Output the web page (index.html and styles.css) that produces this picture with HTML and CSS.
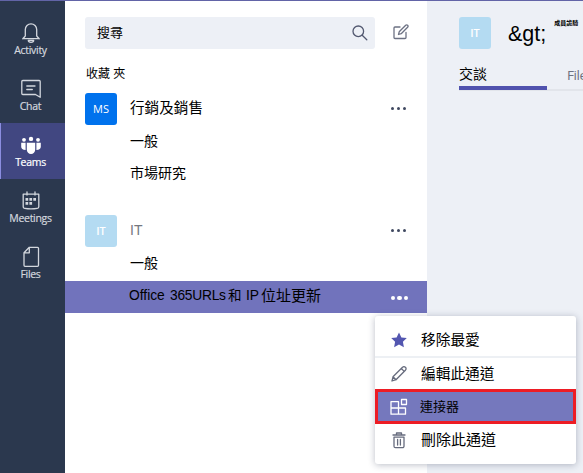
FILE: index.html
```html
<!DOCTYPE html>
<html lang="zh-Hant">
<head>
<meta charset="utf-8">
<title>Teams</title>
<link rel="stylesheet" href="styles.css">
</head>
<body>
<div class="app">
  <nav class="rail">
    <a class="rail-item">
      <svg width="20" height="22" viewBox="0 0 20 22"><path d="M1.800 16.700h16.400M4.300 14V7.500a5.700 5.700 0 0 1 11.400 0V14M4.300 14 1.800 16.700M15.700 14l2.500 2.700M7.300 18.300a2.700 2 0 0 0 5.400 0z"/></svg>
      <span>Activity</span>
    </a>
    <a class="rail-item">
      <svg width="20" height="22" viewBox="0 0 20 22"><path d="M1.800 2.500h16.400a1 1 0 0 1 1 1v15.800l-4.700-2.800H1.800a1 1 0 0 1-1-1v-12a1 1 0 0 1 1-1zM5.800 8H14M5.800 11.500h5.500"/></svg>
      <span>Chat</span>
    </a>
    <a class="rail-item active">
      <svg class="solid" width="20" height="22" viewBox="0 0 20 22"><circle cx="10" cy="4.900" r="2.200"/><circle cx="3" cy="5.800" r="1.900"/><circle cx="17" cy="5.800" r="1.900"/><path d="M5.800 8.800h8.400v6.900a4.200 4.200 0 0 1-8.400 0zM.2 8.800h4.400v7.200C1.600 16 .2 14.400.2 12.800zM19.800 8.800h-4.400v7.200c3 0 4.400-1.600 4.400-3.200z"/></svg>
      <span>Teams</span>
    </a>
    <a class="rail-item">
      <svg width="20" height="22" viewBox="0 0 20 22"><path d="M2.200 4.200h15.600v12.600a1.500 1.500 0 0 1-1.500 1.500q-6.300 1-12.600 0a1.500 1.500 0 0 1-1.500-1.500zM6 2v3M14 2v3"/><path class="dots" d="M8.400 8h2.700v2.700H8.400zM12.300 8H15v2.700h-2.700zM4.500 8h2.700v2.700H4.500zM4.500 12h2.700v2.700H4.500zM8.400 12h2.700v2.700H8.400z"/></svg>
      <span>Meetings</span>
    </a>
    <a class="rail-item">
      <svg width="20" height="22" viewBox="0 0 20 22"><path d="M8.300 1.300h8.200a1 1 0 0 1 1 1v17a1 1 0 0 1-1 1H4a1 1 0 0 1-1-1V6.800zM8.300 1.500v5.300H3"/></svg>
      <span>Files</span>
    </a>
  </nav>

  <section class="panel">
    <div class="search-row">
      <div class="search">
        <span>搜尋</span>
        <svg width="16" height="16" viewBox="0 0 16 16"><circle cx="6.300" cy="6.300" r="5.300"/><path d="m10.200 10.200 4.600 4.600"/></svg>
      </div>
      <svg class="compose" width="16" height="16" viewBox="0 0 16 16"><path d="M7 3H2a1 1 0 0 0-1 1v9.500a1 1 0 0 0 1 1h10a1 1 0 0 0 1-1V8.500M5.500 10.500l.7-2.700L12.700 1.300a1.200 1.200 0 0 1 1.900 1.900L8.200 9.700z"/></svg>
    </div>
    <div class="caption">收藏 夾</div>
    <div class="team">
      <div class="avatar ms">MS</div>
      <span class="team-name">行銷及銷售</span>
      <span class="more"><i></i><i></i><i></i></span>
    </div>
    <div class="channel">一般</div>
    <div class="channel">市場研究</div>
    <div class="team second">
      <div class="avatar it">IT</div>
      <span class="team-name muted">IT</span>
      <span class="more"><i></i><i></i><i></i></span>
    </div>
    <div class="channel">一般</div>
    <div class="channel selected">
      <span class="sel-name"><span class="office">Office</span><span class="urls">365URLs</span><span class="and">和</span><span class="ip">IP</span><span>位址更新</span></span>
      <span class="more"><i></i><i></i><i></i></span>
    </div>
  </section>

  <main class="content">
    <header class="heading">
      <div class="avatar it">IT</div>
      <h1>&amp;gt;</h1>
      <small>成員詭騎</small>
    </header>
    <div class="tabs">
      <span class="tab current">交談</span>
      <span class="tab">Files</span>
    </div>
  </main>

  <div class="menu">
    <div class="item first">
      <svg class="star" width="18" height="18" viewBox="0 0 18 18"><path d="m9 1.500 2.400 4.900 5.400.7-3.900 3.700 1 5.400L9 13.600l-4.900 2.600 1-5.400L1.200 7.100l5.400-.7z"/></svg>
      <span>移除最愛</span>
    </div>
    <div class="item edit">
      <svg width="18" height="18" viewBox="0 0 18 18"><path d="m2 16 1-4.200L12.500 2.300a1.900 1.900 0 0 1 2.900 0 1.900 1.900 0 0 1 0 2.900L6 14.700zM11.300 3.500l2.900 2.900M3 11.800 6 14.700"/></svg>
      <span>編輯此通道</span>
    </div>
    <div class="item connector">
      <svg width="18" height="18" viewBox="0 0 18 18"><path d="M1 3.700h7.500v12.500H1zM1 10h14.500v6.200H8.500M15.500 10v6.200M11.500 1.500h5v5h-5z"/></svg>
      <span>連接器</span>
    </div>
    <div class="item last">
      <svg width="18" height="18" viewBox="0 0 18 18"><path d="M3 4h12M6.500 4V2h5v2M4 6.200v9a1.500 1.500 0 0 0 1.500 1.500h7a1.500 1.500 0 0 0 1.500-1.500v-9zM7.600 8.500V14M10.400 8.500V14"/></svg>
      <span>刪除此通道</span>
    </div>
  </div>
</div>
</body>
</html>
```

FILE: styles.css
```css
* { box-sizing: border-box; }
body {
  margin: 0;
  font-family: "Liberation Sans", "Noto Sans CJK TC", sans-serif;
  color: #000;
}
svg {
  display: block;
  flex: none;
  fill: none;
  stroke: currentColor;
  stroke-width: 1.3;
  stroke-linecap: round;
  stroke-linejoin: round;
}
.app {
  position: relative;
  display: flex;
  width: 583px;
  height: 473px;
  overflow: hidden;
  border-top: 1px solid #6264a7;
  background: #fff;
}

.rail {
  flex: none;
  width: 65px;
  padding-top: 10px;
  background: #2b384e;
}
.rail-item {
  display: flex;
  flex-direction: column;
  align-items: center;
  height: 56px;
  padding: 11px 4px 0 0;
  color: #d3d7de;
  font: 10.5px/14px "Open Sans", sans-serif;
  letter-spacing: -0.300px;
}
.rail-item span { margin-top: -1px; -webkit-text-stroke: 0.2px; }
.rail-item.active {
  background: #414781;
  box-shadow: inset 1px 0 #8b8de0;
  color: #fff;
}
.solid { fill: currentColor; stroke: none; }
.dots { fill: currentColor; stroke: none; }

.panel { flex: none; width: 362px; padding-top: 16px; }
.search-row { display: flex; align-items: center; padding-left: 20px; }
.search {
  display: flex;
  align-items: center;
  justify-content: space-between;
  width: 290px;
  height: 32px;
  padding: 0 7px 0 12px;
  border-radius: 3px;
  background: #edf0f6;
  font-size: 13px;
}
.search span { margin-top: -3px; }
.search svg { color: #525870; }
.compose { margin: -2px 0 0 18px; color: #6c7183; }
.caption {
  height: 44px;
  padding: 15px 0 0 21px;
  font-size: 12px;
  line-height: 20px;
}
.team {
  display: flex;
  align-items: center;
  height: 32px;
  padding: 0 20px;
}
.team.second { margin-top: 26px; }
.avatar {
  flex: none;
  width: 32px;
  height: 32px;
  border-radius: 3px;
  color: #fff;
  font: 11px/32px "Open Sans", sans-serif;
  text-align: center;
}
.ms { background: #0072ed; }
.it { background: #b4dbf2; font-weight: 600; }
.team-name { margin: -2px 0 0 13px; font-size: 14.600px; line-height: 30px; }
.muted { color: #747780; font-size: 14px; }
.more { display: flex; gap: 3px; margin: -1px 1px 0 auto; color: #3f4860; }
.more i { width: 3px; height: 3px; border-radius: 50%; background: currentColor; }
.channel {
  display: flex;
  align-items: center;
  height: 32px;
  padding: 0 20px 3px 65px;
  font-size: 14px;
}
.selected { margin-top: 2px; padding: 0 20px 0 64px; background: #7173bc; }
.sel-name { display: flex; white-space: nowrap; line-height: 28px; font-size: 15px; margin-top: -2px; }
.office, .urls, .ip { font-size: 13.800px; }
.office { width: 41px; }
.urls { width: 58px; letter-spacing: -0.250px; }
.and { width: 18px; font-size: 13.500px; }
.ip { width: 15px; }
.selected .more { gap: 2px; margin: 2px -1px 0 auto; color: #fff; }
.selected .more i { width: 4.500px; height: 4.500px; }

.content { flex: 1; min-width: 0; padding: 16px 0 0 32px; background: #edf0f6; }
.heading { display: flex; height: 32px; }
.heading h1 { margin: 0 0 0 17px; font-size: 21.500px; font-weight: 400; line-height: 34px; }
.heading small { margin-left: 8px; font-size: 6px; font-weight: 700; line-height: 13px; white-space: nowrap; }
.tabs {
  display: flex;
  gap: 20px;
  height: 42px;
  border-bottom: 2px solid #e2e5eb;
}
.tab { flex: none; padding-top: 16px; font: 13.500px/21px "Open Sans", sans-serif; letter-spacing: -0.400px; color: #6c7180; }
.current {
  width: 88px;
  height: 41px;
  padding-top: 14px;
  border-bottom: 4px solid #5052ae;
  color: #000;
  font: 14px/22px "Liberation Sans", "Noto Sans CJK TC", sans-serif;
  letter-spacing: 0;
}

.menu {
  position: absolute;
  top: 315px;
  left: 375px;
  width: 201px;
  height: 148px;
  border-radius: 3px;
  background: #fff;
  box-shadow: 0 1px 7px rgba(30, 40, 70, 0.3);
  font-family: "Noto Sans CJK TC", sans-serif;
}
.item {
  display: flex;
  align-items: center;
  gap: 13px;
  padding-left: 15px;
  font-size: 14.700px;
  line-height: 22px;
  color: #000;
}
.item span { margin-top: -2px; }
.item svg { color: #666b7d; }
.first { height: 42px; padding-top: 7px; border-bottom: 2px solid #edf0f4; }
.item .star { fill: #5356b0; stroke: none; }
.edit { height: 31px; padding-top: 1px; }
.connector {
  height: 35px;
  padding-left: 12px;
  gap: 12px;
  border: 3px solid #ed1c24;
  background: #7578bd;
  font-size: 13px;
}
.item.connector svg { color: #fff; }
.last { height: 32px; }
.last span { font-size: 15px; }
```
